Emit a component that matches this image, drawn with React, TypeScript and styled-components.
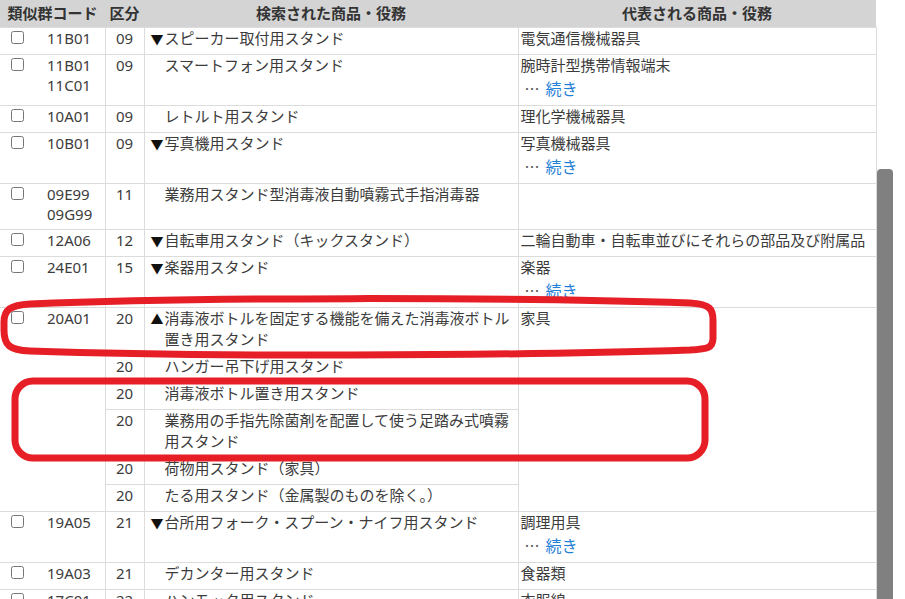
import React from 'react';
import styled, { createGlobalStyle } from 'styled-components';

const GlobalStyle = createGlobalStyle`
  html, body {
    margin: 0;
    padding: 0;
    background: #fff;
  }
  body {
    font-family: "Noto Sans", "Noto Sans CJK JP", sans-serif;
    color: #3c3c3c;
  }
`;

const Page = styled.div`
  display: flex;
  height: 599px;
  overflow: hidden;
`;

const TableArea = styled.div`
  position: relative;
  width: 876px;
  flex: none;
`;

const Table = styled.table`
  width: 876px;
  border-collapse: collapse;
  table-layout: fixed;
  font-size: 15px;
  line-height: 21px;
`;

const HeadCell = styled.th`
  background: #d4d4d4;
  font-weight: bold;
  text-align: center;
  padding: 3px 0 3px;
  border: none;
  color: #333;
`;

const CodeCell = styled.td`
  border: 1px solid #dcdcdc;
  border-left: none;
  padding: 0 0 5px;
  vertical-align: top;
`;

const CodeBox = styled.div`
  display: flex;
  align-items: flex-start;
`;

const Check = styled.input`
  width: 13px;
  height: 13px;
  margin: 3px 0 0 11px;
  flex: none;
`;

const Codes = styled.div<{ $many: boolean }>`
  margin-left: 23px;
  line-height: ${p => (p.$many ? '20px' : '21px')};
`;

const ClassCell = styled.td`
  border: 1px solid #dcdcdc;
  padding: 0 0 5px;
  text-align: center;
  vertical-align: top;
`;

const ItemCell = styled.td`
  border: 1px solid #dcdcdc;
  padding: 0 4px 5px 6px;
  vertical-align: top;
`;

const Item = styled.div`
  display: flex;
`;

const Marker = styled.span`
  flex: none;
  width: 14px;
  font-family: "Noto Sans CJK JP", sans-serif;
  font-size: 13px;
  color: #111;
`;

const RepCell = styled.td`
  border: 1px solid #dcdcdc;
  padding: 0 0 5px 2px;
  vertical-align: top;
`;

const More = styled.div`
  padding-left: 4px;
  height: 24px;
  line-height: 25px;
  color: #555;
  font-family: "Noto Sans CJK JP", sans-serif;
`;

const MoreLink = styled.a`
  margin-left: 6px;
  font-size: 16px;
  color: #1f80d6;
  text-decoration: none;
  cursor: pointer;
`;

const ScrollTrack = styled.div`
  flex: 1;
  padding: 169px 0 0 1px;
`;

const Thumb = styled.div`
  width: 16px;
  height: 100%;
  background: #808080;
  border-radius: 4px 4px 0 0;
`;

const Marks = styled.svg`
  position: absolute;
  left: 0;
  top: 0;
  overflow: visible;
  pointer-events: none;
`;

type Entry = { cls: string; mark?: '▼' | '▲'; name: string };
type Group = { codes: string[]; rep: string; more?: boolean; entries: Entry[] };

const groups: Group[] = [
  { codes: ['11B01'], rep: '電気通信機械器具', entries: [{ cls: '09', mark: '▼', name: 'スピーカー取付用スタンド' }] },
  { codes: ['11B01', '11C01'], rep: '腕時計型携帯情報端末', more: true, entries: [{ cls: '09', name: 'スマートフォン用スタンド' }] },
  { codes: ['10A01'], rep: '理化学機械器具', entries: [{ cls: '09', name: 'レトルト用スタンド' }] },
  { codes: ['10B01'], rep: '写真機械器具', more: true, entries: [{ cls: '09', mark: '▼', name: '写真機用スタンド' }] },
  { codes: ['09E99', '09G99'], rep: '', entries: [{ cls: '11', name: '業務用スタンド型消毒液自動噴霧式手指消毒器' }] },
  { codes: ['12A06'], rep: '二輪自動車・自転車並びにそれらの部品及び附属品', entries: [{ cls: '12', mark: '▼', name: '自転車用スタンド（キックスタンド）' }] },
  { codes: ['24E01'], rep: '楽器', more: true, entries: [{ cls: '15', mark: '▼', name: '楽器用スタンド' }] },
  {
    codes: ['20A01'],
    rep: '家具',
    entries: [
      { cls: '20', mark: '▲', name: '消毒液ボトルを固定する機能を備えた消毒液ボトル置き用スタンド' },
      { cls: '20', name: 'ハンガー吊下げ用スタンド' },
      { cls: '20', name: '消毒液ボトル置き用スタンド' },
      { cls: '20', name: '業務用の手指先除菌剤を配置して使う足踏み式噴霧用スタンド' },
      { cls: '20', name: '荷物用スタンド（家具）' },
      { cls: '20', name: 'たる用スタンド（金属製のものを除く。）' },
    ],
  },
  { codes: ['19A05'], rep: '調理用具', more: true, entries: [{ cls: '21', mark: '▼', name: '台所用フォーク・スプーン・ナイフ用スタンド' }] },
  { codes: ['19A03'], rep: '食器類', entries: [{ cls: '21', name: 'デカンター用スタンド' }] },
  { codes: ['17C01'], rep: '衣服綿', entries: [{ cls: '22', name: 'ハンモック用スタンド' }] },
];

function EntryCells({ entry }: { entry: Entry }) {
  return (
    <>
      <ClassCell>{entry.cls}</ClassCell>
      <ItemCell>
        <Item>
          <Marker>{entry.mark ?? ''}</Marker>
          <span>{entry.name}</span>
        </Item>
      </ItemCell>
    </>
  );
}

function GroupRows({ group }: { group: Group }) {
  const span = group.entries.length;
  const [first, ...rest] = group.entries;
  return (
    <>
      <tr>
        <CodeCell rowSpan={span}>
          <CodeBox>
            <Check type="checkbox" />
            <Codes $many={group.codes.length > 1}>
              {group.codes.map(c => (
                <div key={c}>{c}</div>
              ))}
            </Codes>
          </CodeBox>
        </CodeCell>
        <EntryCells entry={first} />
        <RepCell rowSpan={span}>
          <div>{group.rep}</div>
          {group.more && (
            <More>
              …<MoreLink>続き</MoreLink>
            </More>
          )}
        </RepCell>
      </tr>
      {rest.map((e, i) => (
        <tr key={i}>
          <EntryCells entry={e} />
        </tr>
      ))}
    </>
  );
}

export default function App() {
  return (
    <>
      <GlobalStyle />
      <Page>
        <TableArea>
          <Table>
            <colgroup>
              <col style={{ width: 105 }} />
              <col style={{ width: 39 }} />
              <col style={{ width: 374 }} />
              <col style={{ width: 358 }} />
            </colgroup>
            <thead>
              <tr>
                <HeadCell>類似群コード</HeadCell>
                <HeadCell>区分</HeadCell>
                <HeadCell>検索された商品・役務</HeadCell>
                <HeadCell>代表される商品・役務</HeadCell>
              </tr>
            </thead>
            <tbody>
              {groups.map((g, i) => (
                <GroupRows key={i} group={g} />
              ))}
            </tbody>
          </Table>
          <Marks width="876" height="599" viewBox="0 0 876 599">
            <path
              d="M30 304 C200 297 500 297 690 303 C711 304 713 310 713 320 L713 338 C713 348 708 349 690 350 C500 356 200 357 30 351 C9 350 4 345 4 330 L4 322 C4 310 10 305 30 304 Z"
              fill="none"
              stroke="#e61f27"
              strokeWidth="7"
            />
            <rect x="15" y="381" width="690" height="77" rx="18" fill="none" stroke="#e61f27" strokeWidth="7" />
          </Marks>
        </TableArea>
        <ScrollTrack>
          <Thumb />
        </ScrollTrack>
      </Page>
    </>
  );
}
